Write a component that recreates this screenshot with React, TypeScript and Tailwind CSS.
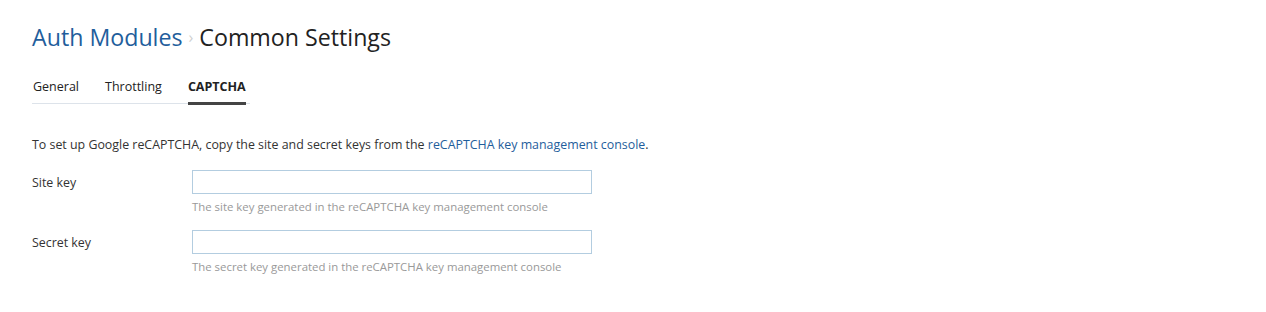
import React from 'react';

const font = { fontFamily: '"Open Sans", "Noto Sans", sans-serif' };

const tabs = ['General', 'Throttling', 'CAPTCHA'];

interface FieldProps {
  label: string;
  help: string;
}

const Field: React.FC<FieldProps> = ({ label, help }) => (
  <div className="flex">
    <label className="w-[160px] pt-[4px] text-[12.4px] text-[#333]">{label}</label>
    <div className="flex flex-col">
      <input
        type="text"
        className="w-[400px] h-[24px] border border-[#b3cde0] bg-white px-2 text-[12px] outline-none"
      />
      <span className="mt-[4px] text-[11.4px] text-[#999]">{help}</span>
    </div>
  </div>
);

export default function App() {
  return (
    <div className="min-h-[312px] bg-white px-[32px] pt-[20px]" style={font}>
      {/* Breadcrumb title */}
      <h1 className="flex items-center text-[23.2px] leading-[34px]">
        <span className="text-[#1f5e9c]">Auth Modules</span>
        <span className="mx-[6px] text-[16px] text-[#cfcfcf]">›</span>
        <span className="text-[#222]">Common Settings</span>
      </h1>

      {/* Tabs */}
      <div className="mt-[24px] flex w-[218px] border-b border-[#dde3ea]">
        {tabs.map((t, i) => (
          <div
            key={t}
            className={`relative pb-[6px] text-[12.5px] ${i === 0 ? 'pl-[1px] mr-[26px]' : 'mr-[26px]'} ${
              t === 'CAPTCHA' ? 'font-bold text-[#222] mr-0' : 'text-[#222]'
            }`}
          >
            {t}
            {t === 'CAPTCHA' && (
              <span className="absolute left-0 right-0 -bottom-[2px] h-[3px] bg-[#444]" />
            )}
          </div>
        ))}
      </div>

      {/* Intro */}
      <p className="mt-[32px] text-[12.4px] text-[#333]">
        To set up Google reCAPTCHA, copy the site and secret keys from the{' '}
        <a className="text-[#1f5e9c]">reCAPTCHA key management console</a>.
      </p>

      <div className="mt-[16px] flex flex-col gap-[15px]">
        <Field label="Site key" help="The site key generated in the reCAPTCHA key management console" />
        <Field label="Secret key" help="The secret key generated in the reCAPTCHA key management console" />
      </div>
    </div>
  );
}
